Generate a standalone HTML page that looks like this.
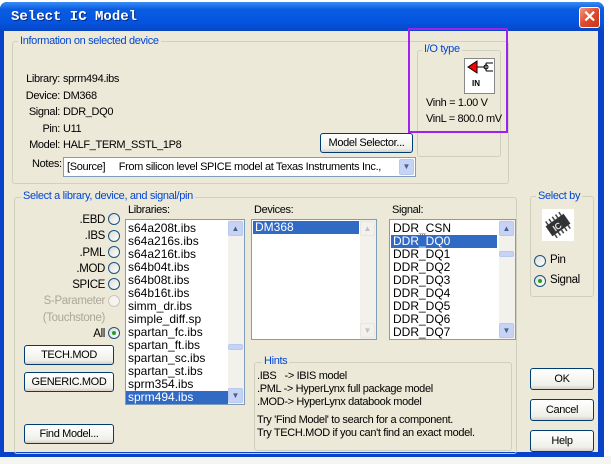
<!DOCTYPE html><html><head><style>
*{box-sizing:border-box}
body{margin:0;width:611px;height:464px;overflow:hidden;background:#fff;font-family:"Liberation Sans",sans-serif;font-size:10.5px;letter-spacing:-0.35px;color:#000;position:relative}
.a{position:absolute}
.win{left:0;top:2px;width:604px;height:455px;background:#0842c8;border-radius:7px 7px 0 0}
.title{left:0;top:2px;width:604px;height:29px;border-radius:7px 7px 0 0;background:linear-gradient(#3a8cf5,#0a5de0 25%,#0454e0 70%,#0846c0)}
.body{left:4px;top:31px;width:594px;height:421px;background:#ece9d8}
.grp{border:1px solid #d0d0bf;border-radius:3px}
.gl{background:#ece9d8;color:#0046d5;padding:0 2px}
.btn{border:1px solid #003c74;border-radius:3px;background:linear-gradient(#fff,#f0f0ea 80%,#d6d0c5);text-align:center;line-height:18px;font-size:11px}
.lb{background:#fff;border:1px solid #7f9db9}
.r{width:12px;height:12px;border-radius:50%;border:1px solid #1c5180;background:linear-gradient(135deg,#dcdcd5,#fff)}
.sel{background:#316ac5;color:#fff}
.arr{width:15px;height:15px;border:1px solid #b8c9ef;border-radius:2px;background:#c6d3f7;color:#4d6185;font-size:8px;text-align:center;line-height:13px;letter-spacing:0}
.ls{font-size:12px;line-height:13px;letter-spacing:0}
</style></head><body>
<div class="a" style="left:0;top:456px;width:611px;height:8px;background:#f4f4f0"></div>
<div class="a" style="left:604px;top:30px;width:7px;height:426px;background:#fff"></div>
<div class="a win"></div>
<div class="a title"></div>
<div class="a" style="left:11px;top:9px;color:#fff;font-weight:bold;font-size:14px;letter-spacing:0;font-family:'Liberation Mono',monospace;text-shadow:1px 1px #0a2a80">Select IC Model</div>
<div class="a" style="left:579px;top:7px;width:21px;height:21px;border:1px solid #fff;border-radius:3px;background:linear-gradient(135deg,#f09a80,#e2492a 50%,#c0381a);color:#fff;font-size:16px;font-weight:bold;text-align:center;line-height:19px">✕</div>
<div class="a body"></div>

<div class="a grp" style="left:12px;top:41px;width:497px;height:143px"></div>
<div class="a gl" style="left:18px;top:35px;font-size:11px">Information on selected device</div>
<div class="a" style="left:0;top:71px;width:60px;text-align:right;line-height:16.5px;font-size:11px">Library:<br>Device:<br>Signal:<br>Pin:<br>Model:</div>
<div class="a" style="left:63px;top:71px;line-height:16.5px;font-size:11px">sprm494.ibs<br>DM368<br>DDR_DQ0<br>U11<br>HALF_TERM_SSTL_1P8</div>
<div class="a btn" style="left:320px;top:133px;width:93px;height:20px">Model Selector...</div>
<div class="a" style="left:32px;top:158px;font-size:11px">Notes:</div>
<div class="a lb" style="left:63px;top:157px;width:353px;height:20px;padding:3px 3px;white-space:pre;font-size:11px">[Source]     From silicon level SPICE model at Texas Instruments Inc.,</div>
<div class="a arr" style="left:399px;top:159px;height:16px">▼</div>

<div class="a grp" style="left:417px;top:50px;width:84px;height:107px"></div>
<div class="a gl" style="left:422px;top:43px;font-size:11px">I/O type</div>
<div class="a" style="left:464px;top:58px;width:31px;height:36px;background:#fff;border:1px solid #888;"></div>
<svg class="a" style="left:465px;top:59px" width="30" height="16"><polygon points="3,8 12,2 12,14" fill="red" stroke="#000" stroke-width="1"/><line x1="12" y1="8" x2="20" y2="8" stroke="#000"/><circle cx="21" cy="8" r="2" fill="none" stroke="#000"/><line x1="21" y1="4" x2="28" y2="4" stroke="#000"/><line x1="21" y1="12" x2="28" y2="12" stroke="#000"/><line x1="21" y1="4" x2="21" y2="12" stroke="#000"/></svg>
<div class="a" style="left:472px;top:79px;font-size:8px;font-weight:bold;letter-spacing:0">IN</div>
<div class="a" style="left:426px;top:95px;line-height:16px;font-size:11px">Vinh = 1.00 V<br>VinL = 800.0 mV</div>
<div class="a" style="left:408px;top:28px;width:100px;height:105px;border:2px solid #a020f0"></div>

<div class="a grp" style="left:14px;top:197px;width:503px;height:257px"></div>
<div class="a gl" style="left:21px;top:190px;font-size:11px">Select a library, device, and signal/pin</div>
<div class="a" style="left:0;top:212px;width:105px;text-align:right;line-height:16.3px;font-size:11.5px">.EBD<br>.IBS<br>.PML<br>.MOD<br>SPICE<br><span style="color:#aca899">S-Parameter<br>(Touchstone)</span><br>All</div>
<div class="a r" style="left:108px;top:213px"></div><div class="a r" style="left:108px;top:230px"></div><div class="a r" style="left:108px;top:246px"></div><div class="a r" style="left:108px;top:262px"></div><div class="a r" style="left:108px;top:278px"></div><div class="a r" style="left:108px;top:295px;border-color:#cac8bb;background:#f4f3ee"></div>
<div class="a r" style="left:108px;top:327px"><div class="a" style="left:3px;top:3px;width:4px;height:4px;border-radius:50%;background:#21a121"></div></div>
<div class="a btn" style="left:24px;top:345px;width:90px;height:20px">TECH.MOD</div>
<div class="a btn" style="left:24px;top:372px;width:90px;height:20px">GENERIC.MOD</div>
<div class="a btn" style="left:24px;top:424px;width:90px;height:20px">Find Model...</div>

<div class="a" style="left:128px;top:204px;font-size:11px">Libraries:</div>
<div class="a lb" style="left:125px;top:219px;width:120px;height:186px">
<div class="a ls" style="left:0;top:2px;width:102px;padding-left:2px">s64a208t.ibs<br>s64a216s.ibs<br>s64a216t.ibs<br>s64b04t.ibs<br>s64b08t.ibs<br>s64b16t.ibs<br>simm_dr.ibs<br>simple_diff.sp<br>spartan_fc.ibs<br>spartan_ft.ibs<br>spartan_sc.ibs<br>spartan_st.ibs<br>sprm354.ibs<br><span class="sel" style="display:block;margin-left:-2px;padding-left:2px">sprm494.ibs</span></div>
<div class="a" style="left:102px;top:0;width:16px;height:184px;background:#f3f1ec"></div>
<div class="a arr" style="left:102px;top:1px">▲</div><div class="a arr" style="left:102px;top:168px">▼</div>
<div class="a arr" style="left:102px;top:124px;height:6px"></div>
</div>

<div class="a" style="left:254px;top:204px;font-size:11px">Devices:</div>
<div class="a lb" style="left:251px;top:219px;width:126px;height:121px">
<div class="a sel ls" style="left:1px;top:1px;width:106px;height:13px;padding-left:2px">DM368</div>
<div class="a" style="left:108px;top:0;width:16px;height:119px;background:#f3f1ec"></div>
<div class="a arr" style="left:108px;top:1px;background:#f3f1ec;border-color:#e8e6df;color:#c0c0c0">▲</div><div class="a arr" style="left:108px;top:103px;background:#f3f1ec;border-color:#e8e6df;color:#c0c0c0">▼</div>
</div>

<div class="a" style="left:392px;top:204px;font-size:11px">Signal:</div>
<div class="a lb" style="left:389px;top:219px;width:127px;height:121px">
<div class="a ls" style="left:0;top:2px;width:107px;padding-left:3px">DDR_CSN<br><span class="sel" style="display:block;margin-left:-2px;padding-left:2px;outline:1px dotted #fff">DDR_DQ0</span>DDR_DQ1<br>DDR_DQ2<br>DDR_DQ3<br>DDR_DQ4<br>DDR_DQ5<br>DDR_DQ6<br>DDR_DQ7</div>
<div class="a" style="left:109px;top:0;width:16px;height:119px;background:#f3f1ec"></div>
<div class="a arr" style="left:109px;top:1px">▲</div><div class="a arr" style="left:109px;top:103px">▼</div>
<div class="a arr" style="left:109px;top:31px;height:6px"></div>
</div>

<div class="a grp" style="left:254px;top:362px;width:258px;height:89px"></div>
<div class="a gl" style="left:262px;top:355px;font-size:11px">Hints</div>
<div class="a" style="left:257px;top:370px;line-height:13px;white-space:pre;font-size:11px">.IBS   -&gt; IBIS model
.PML -&gt; HyperLynx full package model
.MOD-&gt; HyperLynx databook model</div>
<div class="a" style="left:257px;top:414px;line-height:13px;font-size:11px">Try 'Find Model' to search for a component.<br>Try TECH.MOD if you can't find an exact model.</div>

<div class="a grp" style="left:530px;top:196px;width:64px;height:101px"></div>
<div class="a gl" style="left:536px;top:190px;font-size:11px">Select by</div>
<div class="a" style="left:542px;top:209px;width:32px;height:32px;background:#fff"></div>
<svg class="a" style="left:542px;top:209px" width="32" height="32"><g transform="rotate(-35 16 16)"><rect x="5" y="10" width="22" height="12" fill="#333"/><g stroke="#444" stroke-width="1.5"><line x1="8" y1="6" x2="8" y2="10"/><line x1="12" y1="6" x2="12" y2="10"/><line x1="16" y1="6" x2="16" y2="10"/><line x1="20" y1="6" x2="20" y2="10"/><line x1="24" y1="6" x2="24" y2="10"/><line x1="8" y1="22" x2="8" y2="26"/><line x1="12" y1="22" x2="12" y2="26"/><line x1="16" y1="22" x2="16" y2="26"/><line x1="20" y1="22" x2="20" y2="26"/><line x1="24" y1="22" x2="24" y2="26"/></g><text x="10" y="20" font-size="9" fill="#ddd" font-family="Liberation Sans" font-weight="bold">IC</text></g></svg>
<div class="a r" style="left:534px;top:255px"></div><div class="a" style="left:550px;top:254px;font-size:11.5px">Pin</div>
<div class="a r" style="left:534px;top:275px"><div class="a" style="left:3px;top:3px;width:4px;height:4px;border-radius:50%;background:#21a121"></div></div><div class="a" style="left:550px;top:274px;font-size:11.5px">Signal</div>

<div class="a btn" style="left:530px;top:368px;width:64px;height:22px;line-height:20px">OK</div>
<div class="a btn" style="left:530px;top:399px;width:64px;height:22px;line-height:20px">Cancel</div>
<div class="a btn" style="left:530px;top:430px;width:64px;height:22px;line-height:20px">Help</div>
</body></html>
